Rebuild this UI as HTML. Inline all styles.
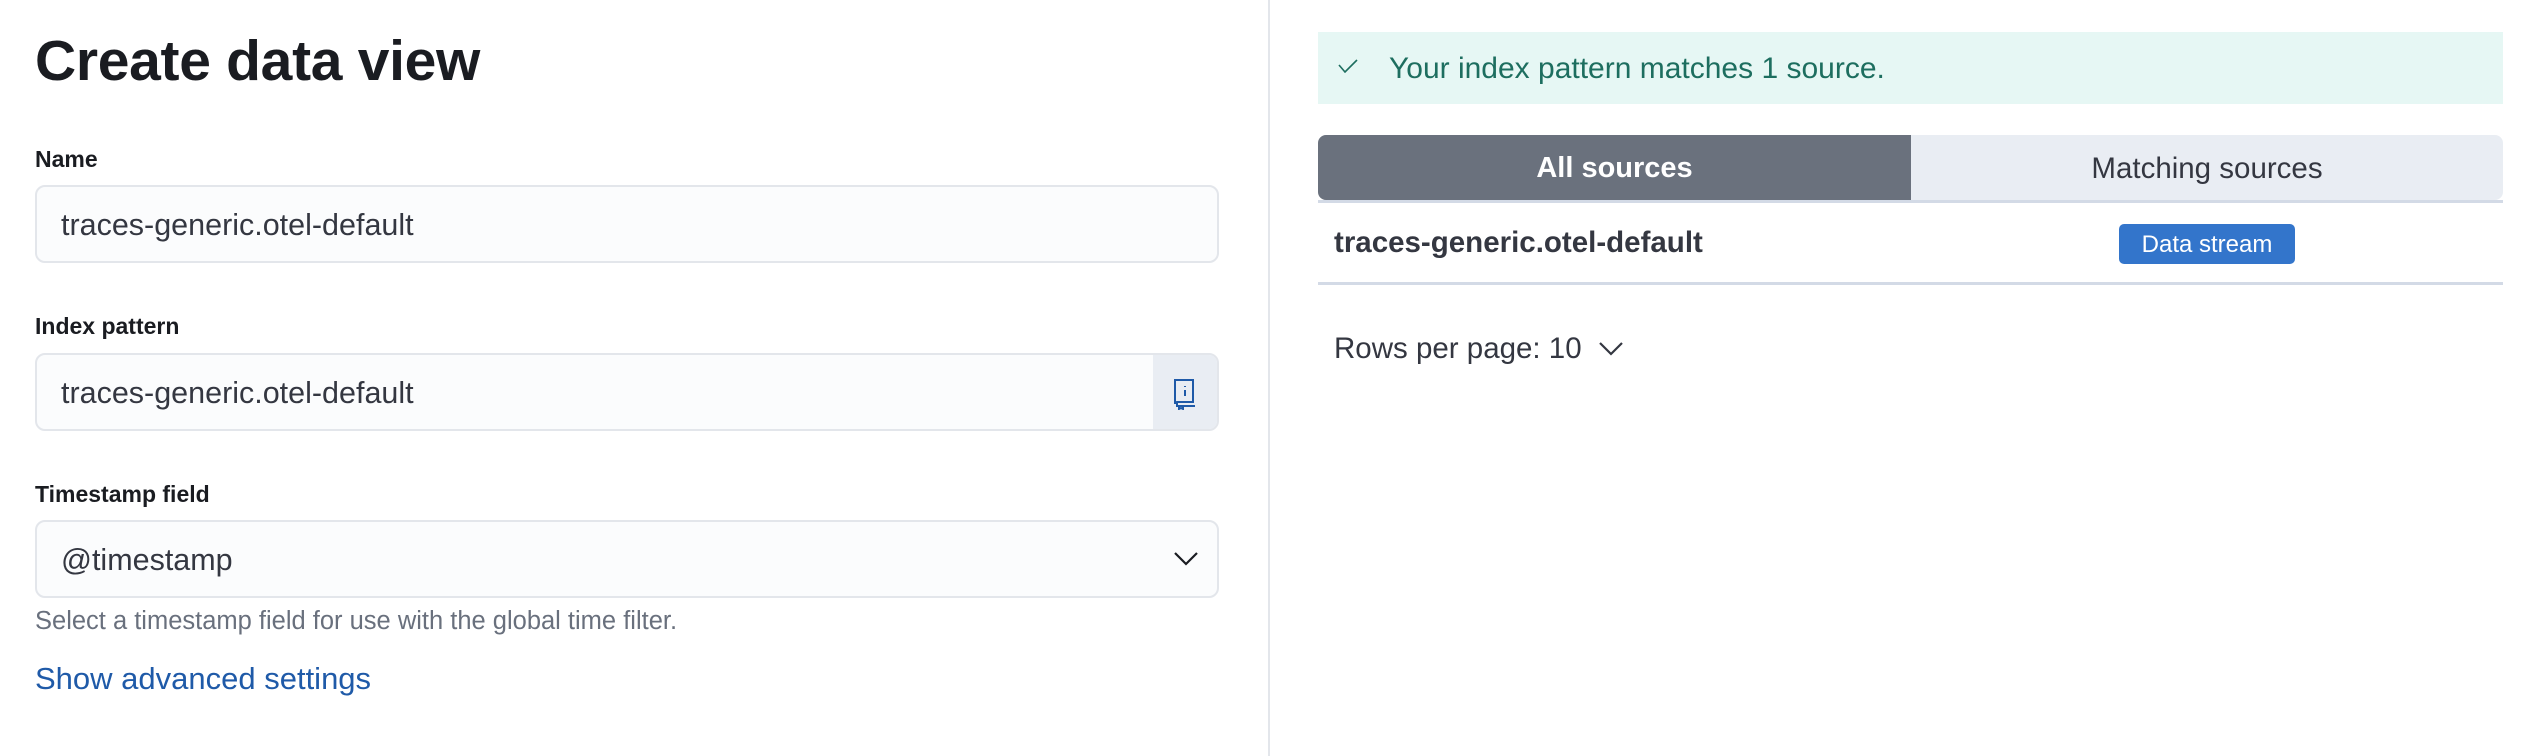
<!DOCTYPE html>
<html><head><meta charset="utf-8"><style>
*{box-sizing:border-box;margin:0;padding:0}
body{width:2524px;height:756px;background:#fff;font-family:"Liberation Sans",sans-serif;color:#1a1c21;position:relative;overflow:hidden}
.a{position:absolute}
h1{position:absolute;left:35px;top:28px;font-size:57px;font-weight:bold;letter-spacing:-0.3px}
.lbl{position:absolute;left:35px;font-size:23px;font-weight:bold}
.inp{position:absolute;left:35px;width:1184px;height:78px;background:#fbfcfd;border:2px solid #e3e6eb;border-radius:10px;font-size:30.5px;padding-left:24px;line-height:76px;color:#343741}
</style></head><body>
<h1>Create data view</h1>
<div class="lbl" style="top:146px">Name</div>
<div class="inp" style="top:185px">traces-generic.otel-default</div>
<div class="lbl" style="top:313px">Index pattern</div>
<div class="inp" style="top:353px;overflow:hidden">traces-generic.otel-default
<div class="a" style="right:0;top:0;width:64px;height:76px;background:#e9edf3">
<svg class="a" style="left:18px;top:21px" width="28" height="34" viewBox="0 0 28 34" fill="none" stroke="#1f5aa8" stroke-width="2"><path d="M4 4h18v22H6a2 2 0 0 0-2 2zM4 28v-24M6 26v4h18M8 30v3l2-1 2 1v-3"/><path d="M14 10v1M14 14v6" /></svg>
</div></div>
<div class="lbl" style="top:481px">Timestamp field</div>
<div class="inp" style="top:520px">@timestamp
<svg class="a" style="left:1137px;top:30px" width="24" height="14" viewBox="0 0 24 14" fill="none" stroke="#1a1c21" stroke-width="2.2"><path d="M1 1l11 11 11-11"/></svg></div>
<div class="a" style="left:35px;top:607px;font-size:25.5px;color:#69707d">Select a timestamp field for use with the global time filter.</div>
<div class="a" style="left:35px;top:661px;font-size:31px;color:#1f5aa8">Show advanced settings</div>
<div class="a" style="left:1268px;top:0;width:2px;height:756px;background:#e3e6eb"></div>
<div class="a" style="left:1318px;top:32px;width:1185px;height:72px;background:#e6f7f4"></div>
<svg class="a" style="left:1338px;top:59px" width="20" height="14" viewBox="0 0 20 14" fill="none" stroke="#1d6e5f" stroke-width="1.6"><path d="M1 6l6 7L19 1"/></svg>
<div class="a" style="left:1389px;top:52px;font-size:30px;color:#1d6e5f">Your index pattern matches 1 source.</div>
<div class="a" style="left:1318px;top:135px;width:593px;height:65px;background:#6a717d;border-radius:8px 0 0 8px;color:#fff;font-weight:bold;font-size:29px;text-align:center;line-height:67px">All sources</div>
<div class="a" style="left:1911px;top:135px;width:592px;height:65px;background:#e9edf3;border-radius:0 8px 8px 0;color:#343741;font-size:29.5px;text-align:center;line-height:67px">Matching sources</div>
<div class="a" style="left:1318px;top:200px;width:1185px;height:3px;background:#d3dae6"></div>
<div class="a" style="left:1334px;top:226px;font-size:29.5px;font-weight:bold;color:#343741">traces-generic.otel-default</div>
<div class="a" style="left:2119px;top:224px;width:176px;height:40px;background:#3375cb;border-radius:5px;color:#fff;font-size:24px;text-align:center;line-height:41px">Data stream</div>
<div class="a" style="left:1318px;top:282px;width:1185px;height:3px;background:#d3dae6"></div>
<div class="a" style="left:1334px;top:332px;font-size:29.5px;color:#343741">Rows per page: 10</div>
<svg class="a" style="left:1599px;top:342px" width="24" height="14" viewBox="0 0 24 14" fill="none" stroke="#343741" stroke-width="2.2"><path d="M1 1l11 11 11-11"/></svg>
</body></html>
